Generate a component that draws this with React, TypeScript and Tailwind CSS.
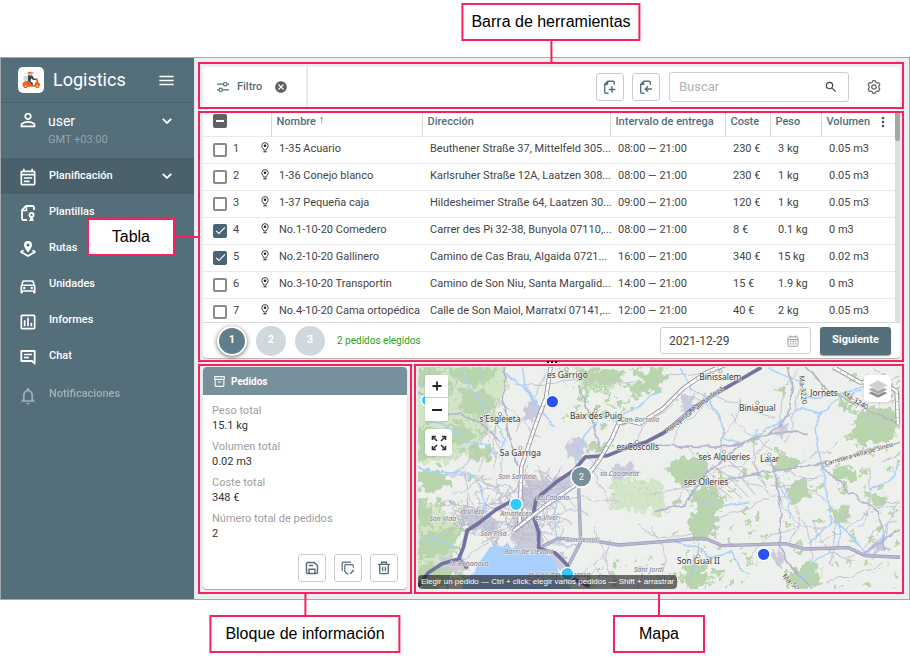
import { useState, type ReactNode } from "react";
import {
  MdCancel,
  MdCheck,
  MdMenu,
  MdMoreVert,
  MdNotificationsNone,
  MdOutlineAssessment,
  MdOutlineDirectionsCar,
  MdOutlineEventNote,
  MdOutlineInventory2,
  MdPersonOutline,
  MdSearch,
} from "react-icons/md";

type Order = {
  id: number;
  name: string;
  address: string;
  interval: string;
  cost: string;
  weight: string;
  volume: string;
};

const orders: Order[] = [
  { id: 1, name: "1-35 Acuario", address: "Beuthener Straße 37, Mittelfeld 305...", interval: "08:00 — 21:00", cost: "230 €", weight: "3 kg", volume: "0.05 m3" },
  { id: 2, name: "1-36 Conejo blanco", address: "Karlsruher Straße 12A, Laatzen 308...", interval: "08:00 — 21:00", cost: "230 €", weight: "1 kg", volume: "0.05 m3" },
  { id: 3, name: "1-37 Pequeña caja", address: "Hildesheimer Straße 64, Laatzen 30...", interval: "09:00 — 21:00", cost: "120 €", weight: "1 kg", volume: "0.05 m3" },
  { id: 4, name: "No.1-10-20 Comedero", address: "Carrer des Pi 32-38, Bunyola 07110,...", interval: "08:00 — 21:00", cost: "8 €", weight: "0.1 kg", volume: "0 m3" },
  { id: 5, name: "No.2-10-20 Gallinero", address: "Camino de Cas Brau, Algaida 0721...", interval: "16:00 — 21:00", cost: "340 €", weight: "15 kg", volume: "0.02 m3" },
  { id: 6, name: "No.3-10-20 Transportín", address: "Camino de Son Niu, Santa Margalid...", interval: "14:00 — 21:00", cost: "15 €", weight: "1.9 kg", volume: "0 m3" },
  { id: 7, name: "No.4-10-20 Cama ortopédica", address: "Calle de Son Maiol, Marratxí 07141,...", interval: "12:00 — 21:00", cost: "40 €", weight: "2 kg", volume: "0.05 m3" },
];

const totals = [
  ["Peso total", "15.1 kg"],
  ["Volumen total", "0.02 m3"],
  ["Coste total", "348 €"],
  ["Número total de pedidos", "2"],
];

/* ---------- icons ---------- */

function LogoIcon() {
  return (
    <svg viewBox="0 0 26 26" className="size-[26px]">
      <rect width="26" height="26" rx="5" fill="#fff" />
      <path d="M5.500 9h5.500v5H5.500z" fill="#cfd8dc" />
      <path d="M10 8.500c1-1.300 3-1.500 4-.5l2 3.500 3 .5-.3 1.300-4-.5-1.500-1.500-.7 3 2.500 2-.5 2.700h-1.400l-.2-2.400L10 14.500z" fill="#37474f" />
      <path d="M9.500 6.400C9.800 5 12 4.300 14 5.400l1.800.2-.2.9-6 .6z" fill="#f4631e" />
      <circle cx="12.600" cy="7.600" r="1.400" fill="#f2b28c" />
      <path d="M4.500 17.500c0-2.500 2-3.700 5-3.500l2.500 1.500 2 2.600h2.500c.2-2 1-3 2-3.500l-.8-3.200 1.600-.3 1 4.200c1.200.6 1.900 1.700 1.900 3.400h-3.700l-1 1.100H5z" fill="#f4631e" />
      <circle cx="7.600" cy="19" r="2.200" fill="#f4631e" />
      <circle cx="7.600" cy="19" r=".8" fill="#fff" />
      <circle cx="19.400" cy="19" r="2.200" fill="#f4631e" />
      <circle cx="19.400" cy="19" r=".8" fill="#fff" />
    </svg>
  );
}

function ChevronIcon() {
  return (
    <svg viewBox="0 0 10 6" className="h-[6px] w-[10px]" fill="none" stroke="currentColor" strokeWidth="1.800">
      <path d="M.8.8 5 5 9.200.8" />
    </svg>
  );
}

function TemplateIcon() {
  return (
    <svg viewBox="0 0 18 18" className="size-[18px]" fill="none" stroke="currentColor" strokeWidth="1.800">
      <path d="M8 16H4.500C3.600 16 3 15.400 3 14.500V6l4-4h6.500c.9 0 1.500.6 1.500 1.500V6" />
      <path d="M7.500 2v4.500H3" strokeWidth="1.400" />
      <path d="M12.500 8a3 3 0 0 0-3 3c0 1.500 1 2 1.700 3.500L10 17h5l-1.200-2.500c.7-1.500 1.700-2 1.700-3.500a3 3 0 0 0-3-3z" fill="currentColor" stroke="none" />
      <circle cx="12.500" cy="11" r="1.100" fill="#546e7a" stroke="none" />
    </svg>
  );
}

function RoutesIcon() {
  return (
    <svg viewBox="0 0 18 18" className="size-[18px]" fill="none">
      <path d="M4.500 10.200 2 12l7 4 7-4-2.500-1.800" stroke="currentColor" strokeWidth="1.700" strokeLinejoin="round" />
      <path d="M9 1a4 4 0 0 0-4 4c0 2.800 4 7.500 4 7.500S13 7.800 13 5a4 4 0 0 0-4-4z" fill="currentColor" />
      <circle cx="9" cy="5" r="1.500" fill="#546e7a" />
    </svg>
  );
}

function ChatIcon() {
  return (
    <svg viewBox="0 0 18 18" className="size-[18px]" fill="none" stroke="currentColor" strokeWidth="1.800">
      <path d="M2.300 3h13.400v12.500L13 13H2.300z" strokeLinejoin="round" />
      <path d="M5 6.600h8M5 9.400h5" strokeWidth="1.500" />
    </svg>
  );
}

function FilterIcon() {
  return (
    <svg viewBox="0 0 12 12" className="size-[12px]" fill="none" stroke="currentColor" strokeWidth="1.200">
      <path d="M0 3.200h6.400M10 3.200h2M0 8.800h1.800M5.500 8.800H12" />
      <circle cx="8.200" cy="3.200" r="1.700" />
      <circle cx="3.700" cy="8.800" r="1.700" />
    </svg>
  );
}

function GearIcon() {
  return (
    <svg viewBox="0 0 14 14" className="size-[14px]" fill="none" stroke="currentColor" strokeWidth="1.200" strokeLinejoin="round">
      <path d="M5.400 2 5.900.7h2.200L8.600 2l1.700 1 1.400-.3 1.200 2-.9 1.200v2.200l.9 1.200-1.200 2-1.400-.3-1.700 1-.5 1.300H5.900L5.400 12l-1.700-1-1.400.3-1.200-2L2 8.100V5.900l-.9-1.200 1.200-2 1.400.3z" />
      <circle cx="7" cy="7" r="2.200" />
    </svg>
  );
}

function PageIcon({ children }: { children: ReactNode }) {
  return (
    <svg viewBox="0 0 14 14" className="size-[14px]" fill="none" stroke="currentColor" strokeWidth="1.400">
      <path d="M5.500 13.200H3c-.8 0-1.300-.5-1.300-1.300V4.300L4.800 1.200H10c.8 0 1.300.5 1.300 1.300v2.200" />
      <path d="M5 1v3.700H1.600z" fill="currentColor" strokeWidth=".6" />
      {children}
    </svg>
  );
}

function PinIcon() {
  return (
    <svg viewBox="0 0 8 11" className="h-[11px] w-[8px]" fill="none" stroke="#444" strokeWidth="1">
      <path d="M4 .6A3.200 3.200 0 0 0 .8 3.800c0 1.700 1.500 2.500 2 4.200h2.400c.5-1.700 2-2.500 2-4.200A3.200 3.200 0 0 0 4 .6z" />
      <circle cx="4" cy="3.700" r="1.300" fill="#222" stroke="none" />
      <path d="M2.400 9.700h3.200" strokeWidth="1.300" />
    </svg>
  );
}

function CalendarIcon() {
  return (
    <svg viewBox="0 0 12 12" className="size-[12px]" fill="none" stroke="#9e9e9e" strokeWidth="1">
      <rect x="1" y="1.800" width="10" height="9.500" rx="1" />
      <path d="M1 4.500h10M3.500.3v2M8.500.3v2" />
      <path d="M3 6.500h6.400M3 8.800h6.400" strokeWidth="1.300" strokeDasharray="1.400 1" />
    </svg>
  );
}

function SaveIcon() {
  return (
    <svg viewBox="0 0 14 14" className="size-[14px]" fill="none" stroke="currentColor" strokeWidth="1.400">
      <path d="M1.500 2.800c0-.8.5-1.300 1.300-1.300h6.400l3.300 3.300v6.400c0 .8-.5 1.300-1.300 1.300H2.800c-.8 0-1.300-.5-1.300-1.300z" />
      <path d="M4 4.500h4M4 12.300V8.200h6v4.100" />
    </svg>
  );
}

function CopyEditIcon() {
  return (
    <svg viewBox="0 0 14 14" className="size-[14px]" fill="none" stroke="currentColor" strokeWidth="1.200">
      <path d="M1.200 10V2c0-.5.300-.8.800-.8h8" />
      <path d="M7.500 12.800H6.300L3.800 10.500V4.700c0-.7.400-1.100 1.100-1.100h6.300c.7 0 1.100.4 1.100 1.100v2" />
      <path d="m9.300 12.800 3.500-3.700" strokeWidth="1.500" />
    </svg>
  );
}

function TrashIcon() {
  return (
    <svg viewBox="0 0 14 14" className="size-[14px]" fill="none" stroke="currentColor" strokeWidth="1.400">
      <path d="M1 3.400h12M4.700 3V1.300h4.600V3" />
      <path d="M2.700 3.600v7.700c0 .8.500 1.300 1.300 1.300h6c.8 0 1.300-.5 1.300-1.300V3.600" />
      <path d="M5.600 5.800v4.400M8.400 5.800v4.400" />
    </svg>
  );
}

function ExpandIcon() {
  return (
    <svg viewBox="0 0 16 16" className="size-[16px]" fill="none" stroke="#333" strokeWidth="1.600">
      <path d="M1.500 5V1.500H5M11 1.500h3.500V5M14.500 11v3.500H11M5 14.500H1.500V11" />
      <path d="m2 2 4 4M14 2l-4 4M14 14l-4-4M2 14l4-4" />
    </svg>
  );
}

function LayersIcon() {
  return (
    <svg viewBox="0 0 22 22" className="size-[22px]">
      <path d="m11 10.500 10 4.500-10 5-10-5z" fill="#8a8a8a" stroke="#fff" strokeWidth=".6" />
      <path d="m11 7 10 4.500-10 5-10-5z" fill="#a8a8a8" stroke="#fff" strokeWidth=".6" />
      <path d="m11 2 10 5.500-10 5-10-5z" fill="#cfcfcf" stroke="#fff" strokeWidth=".6" />
    </svg>
  );
}

/* ---------- annotations ---------- */

const calloutBox = "whitespace-nowrap border-2 border-[#f5225b] bg-white text-center font-['Liberation_Sans',sans-serif] text-base leading-[34px] text-black";

function CalloutAbove({ label }: { label: string }) {
  return (
    <div className="absolute bottom-full left-1/2 z-10 flex -translate-x-1/2 flex-col items-center">
      <div className={`${calloutBox} px-2`}>{label}</div>
      <div className="h-[23px] w-[2px] bg-[#f5225b]" />
    </div>
  );
}

function CalloutBelow({ label, wide }: { label: string; wide?: boolean }) {
  return (
    <div className="absolute left-1/2 top-full z-10 flex -translate-x-1/2 flex-col items-center">
      <div className="h-[23px] w-[2px] bg-[#f5225b]" />
      <div className={`${calloutBox} ${wide ? "px-[14px]" : "px-6"}`}>{label}</div>
    </div>
  );
}

function CalloutLeft({ label }: { label: string }) {
  return (
    <div className="absolute right-full top-1/2 z-10 flex -translate-y-1/2 items-center">
      <div className={`${calloutBox} px-[23px]`}>{label}</div>
      <div className="h-[2px] w-[25px] bg-[#f5225b]" />
    </div>
  );
}

/* ---------- sidebar ---------- */

const navItems = [
  { label: "Plantillas", icon: <TemplateIcon /> },
  { label: "Rutas", icon: <RoutesIcon /> },
  { label: "Unidades", icon: <MdOutlineDirectionsCar className="size-[20px]" /> },
  { label: "Informes", icon: <MdOutlineAssessment className="size-[20px]" /> },
  { label: "Chat", icon: <ChatIcon /> },
];

function NavLink({ label, icon }: { label: string; icon: ReactNode }) {
  return (
    <a href="#" className="flex h-9 items-center gap-[11px] px-[17px] text-white">
      <span className="grid size-5 place-items-center pt-[2px]">{icon}</span>
      <span className="text-[11px] font-medium">{label}</span>
    </a>
  );
}

function Sidebar() {
  return (
    <aside className="w-[194px] shrink-0 border-r border-[#dfe5e8] bg-[#546e7a] text-white">
      <div className="flex h-[45px] items-center border-b border-[#4a626d] pl-[17px] pr-[18px]">
        <LogoIcon />
        <span className="ml-[9px] text-lg">Logistics</span>
        <button type="button" aria-label="Menu" className="ml-auto">
          <MdMenu className="size-[19px]" />
        </button>
      </div>
      <button type="button" className="flex h-[55px] w-full items-start pl-[16px] pr-[22px] pt-[6px] text-left">
        <MdPersonOutline className="size-[22px]" />
        <span className="ml-[9px]">
          <span className="block text-sm leading-[24px]">user</span>
          <span className="block text-[11px] leading-[13px] text-[#93a4ac]">GMT +03:00</span>
        </span>
        <span className="ml-auto mt-[9px]">
          <ChevronIcon />
        </span>
      </button>
      <nav>
        <div className="flex items-center bg-[#4a616c] pr-[22px]">
          <NavLink label="Planificación" icon={<MdOutlineEventNote className="size-[20px]" />} />
          <span className="ml-auto">
            <ChevronIcon />
          </span>
        </div>
        {navItems.map((item) => (
          <NavLink key={item.label} label={item.label} icon={item.icon} />
        ))}
        <div className="pt-[2px] opacity-45">
          <NavLink label="Notificaciones" icon={<MdNotificationsNone className="size-[20px]" />} />
        </div>
      </nav>
    </aside>
  );
}

/* ---------- toolbar ---------- */

const squareButton = "grid size-7 place-items-center rounded-[3px] border border-[#c3cfd5] bg-white text-[#546e7a]";

function Toolbar() {
  return (
    <section className="relative border-2 border-[#f5225b] pl-[3px] pr-[2px] pt-[3px]">
      <CalloutAbove label="Barra de herramientas" />
      <div className="flex h-10 items-center rounded-t bg-white">
        <div className="flex h-full w-[105px] items-center border-r-2 border-[#e6e9eb] pl-[14px] text-[#546e7a]">
          <FilterIcon />
          <span className="ml-2 text-[11px] font-medium">Filtro</span>
          <button type="button" aria-label="Quitar filtro" className="ml-3 text-[#616161]">
            <MdCancel className="size-[14px]" />
          </button>
        </div>
        <button type="button" aria-label="Añadir" className={`${squareButton} ml-auto`}>
          <PageIcon>
            <path d="M9 6.200v6.600M5.700 9.500h6.600" />
          </PageIcon>
        </button>
        <button type="button" aria-label="Importar" className={`${squareButton} ml-2`}>
          <PageIcon>
            <path d="M13 9H6.200M9 6.200 6.200 9 9 11.800" />
          </PageIcon>
        </button>
        <label className="ml-[9px] flex h-[30px] w-[180px] items-center rounded-[3px] border border-[#cfcfcf] pl-[9px] pr-[10px]">
          <input
            type="search"
            aria-label="Buscar"
            placeholder="Buscar"
            className="min-w-0 flex-1 bg-transparent text-[13px] text-[#4a4a4a] outline-none placeholder:text-[#b3b3b3]"
          />
          <MdSearch className="size-[14px] text-[#444]" />
        </label>
        <button type="button" aria-label="Ajustes" className="ml-[18px] mr-[19px] text-[#616161]">
          <GearIcon />
        </button>
      </div>
    </section>
  );
}

/* ---------- table ---------- */

function OrderCheckbox({ label, checked, onChange }: { label: string; checked: boolean; onChange: () => void }) {
  return (
    <span className="grid size-[14px] place-items-center">
      <input
        type="checkbox"
        aria-label={label}
        checked={checked}
        onChange={onChange}
        className="col-start-1 row-start-1 size-[14px] appearance-none rounded-[2px] border-2 border-[#8a8a8a] checked:border-[#4a6572] checked:bg-[#4a6572]"
      />
      {checked && <MdCheck className="pointer-events-none col-start-1 row-start-1 size-[13px] text-white" />}
    </span>
  );
}

const th = "h-[23px] border-l border-[#d8dcde] pb-[5px] pl-[5px] text-left font-medium";
const td = "whitespace-nowrap pl-[8px]";

function OrdersTable() {
  const [selected, setSelected] = useState<number[]>([4, 5]);
  const [page, setPage] = useState(1);
  const [date, setDate] = useState("2021-12-29");

  function toggle(id: number) {
    setSelected((ids) => (ids.includes(id) ? ids.filter((item) => item !== id) : [...ids, id]));
  }

  return (
    <section className="relative border-2 border-[#f5225b] pb-[2px] pl-[3px] pr-[2px]">
      <CalloutLeft label="Tabla" />
      <div className="rounded-b bg-white shadow-[0_1px_1px_rgba(0,0,0,0.25)]">
        <div className="flex h-[209px] overflow-hidden">
          <table className="w-full table-fixed text-[11px] text-[#444]">
            <colgroup>
              <col className="w-[68px]" />
              <col className="w-[151px]" />
              <col />
              <col className="w-[115px]" />
              <col className="w-[45px]" />
              <col className="w-[51px]" />
              <col className="w-[74px]" />
            </colgroup>
            <thead className="text-[#546e7a]">
              <tr className="border-b border-[#e8eaeb]">
                <th className="h-[23px] pb-[6px] pl-[10px]">
                  <button type="button" aria-label="Deseleccionar todo" className="grid size-[14px] place-items-center rounded-[2px] bg-[#616161]">
                    <span className="h-[2px] w-2 bg-white" />
                  </button>
                </th>
                <th className={th}>
                  Nombre <span className="align-top font-normal leading-[11px]">↑</span>
                </th>
                <th className={th}>Dirección</th>
                <th className={th}>Intervalo de entrega</th>
                <th className={th}>Coste</th>
                <th className={th}>Peso</th>
                <th className={th}>
                  <div className="flex items-center justify-between pr-1">
                    Volumen
                    <MdMoreVert className="size-4 text-[#555]" />
                  </div>
                </th>
              </tr>
            </thead>
            <tbody>
              {orders.map((order) => (
                <tr key={order.id} className="h-[27px] border-b border-[#e8eaeb]">
                  <td className="pl-[10px]">
                    <div className="flex items-center gap-[6px]">
                      <OrderCheckbox
                        label={order.name}
                        checked={selected.includes(order.id)}
                        onChange={() => toggle(order.id)}
                      />
                      <span>{order.id}</span>
                      <span className="-mt-1 ml-auto mr-[2px]">
                        <PinIcon />
                      </span>
                    </div>
                  </td>
                  <td className={td}>{order.name}</td>
                  <td className={td}>{order.address}</td>
                  <td className={td}>{order.interval}</td>
                  <td className={td}>{order.cost}</td>
                  <td className={td}>{order.weight}</td>
                  <td className={td}>{order.volume}</td>
                </tr>
              ))}
            </tbody>
          </table>
          <div className="w-[5px] shrink-0 bg-[#e0e0e0]">
            <div className="h-7 rounded-b bg-[#a6a6a6]" />
          </div>
        </div>
        <div className="flex h-9 items-center border-t border-[#d5d9db] pl-[14px] pr-[9px]">
          <div className="flex items-center gap-[9px] text-[11px] font-bold text-white">
            {[1, 2, 3].map((n) => (
              <button
                key={n}
                type="button"
                onClick={() => setPage(n)}
                className={
                  n === page
                    ? "size-[30px] rounded-full border-2 border-white bg-[#607d8b] shadow-[0_1px_4px_rgba(0,0,0,0.6)]"
                    : "size-[30px] rounded-full bg-[#cfd8dc]"
                }
              >
                {n}
              </button>
            ))}
          </div>
          <span className="ml-3 text-[10px] text-[#22a522]">{selected.length} pedidos elegidos</span>
          <label className="ml-auto flex h-[27px] w-[151px] items-center rounded-[3px] border border-[#cfcfcf] pl-2 pr-[11px]">
            <input
              type="text"
              aria-label="Fecha"
              value={date}
              onChange={(e) => setDate(e.target.value)}
              className="min-w-0 flex-1 bg-transparent text-xs text-[#444] outline-none"
            />
            <CalendarIcon />
          </label>
          <button type="button" className="ml-[9px] h-7 w-[71px] rounded-[3px] bg-[#546e7a] text-[11px] font-bold text-white shadow-[0_1px_1px_rgba(0,0,0,0.4)]">
            Siguiente
          </button>
        </div>
      </div>
    </section>
  );
}

/* ---------- info block ---------- */

function InfoBlock() {
  return (
    <section className="relative w-[214px] shrink-0 border-2 border-[#f5225b] px-[3px] pb-[3px] pt-px">
      <CalloutBelow label="Bloque de información" wide />
      <div className="flex h-full flex-col rounded bg-white shadow-[0_1px_1px_rgba(0,0,0,0.3)]">
        <h2 className="flex h-7 items-center gap-[5px] rounded-t bg-[#78909c] pl-[10px] text-[10px] font-bold text-white">
          <MdOutlineInventory2 className="size-[13px]" />
          Pedidos
        </h2>
        <dl className="flex flex-col gap-[6px] px-[9px] pt-2 text-[11px] leading-[15px]">
          {totals.map(([name, value]) => (
            <div key={name}>
              <dt className="text-[#9e9e9e]">{name}</dt>
              <dd className="text-[#333]">{value}</dd>
            </div>
          ))}
        </dl>
        <div className="mt-auto flex justify-end gap-2 px-[9px] pb-[7px] pt-3">
          <button type="button" aria-label="Guardar" className={squareButton}>
            <SaveIcon />
          </button>
          <button type="button" aria-label="Editar copia" className={squareButton}>
            <CopyEditIcon />
          </button>
          <button type="button" aria-label="Eliminar" className={squareButton}>
            <TrashIcon />
          </button>
        </div>
      </div>
    </section>
  );
}

/* ---------- map ---------- */

// small linear generator, so that the terrain is the same on every render
function seeded(seed: number) {
  let s = seed;
  return () => {
    s = (s * 16807) % 2147483647;
    return s / 2147483647;
  };
}

function streets(seed: number, count: number, x: number, y: number, w: number, h: number, len: number) {
  const rnd = seeded(seed);
  let d = "";
  for (let i = 0; i < count; i++) {
    let px = x + rnd() * w;
    let py = y + rnd() * h;
    let a = rnd() * Math.PI * 2;
    d += `M${px.toFixed(0)} ${py.toFixed(0)}`;
    for (let k = 0; k < 5; k++) {
      a += (rnd() - 0.5) * 1.1;
      px += (Math.cos(a) * len) / 5;
      py += (Math.sin(a) * len) / 5;
      d += `L${px.toFixed(0)} ${py.toFixed(0)}`;
    }
  }
  return d;
}

function groves(seed: number, count: number, x: number, y: number, w: number, h: number) {
  const rnd = seeded(seed);
  let d = "";
  for (let i = 0; i < count; i++) {
    const px = x + rnd() * w;
    const py = y + rnd() * h;
    const r = 4 + rnd() * 11;
    d += `M${px.toFixed(0)} ${py.toFixed(0)}l${r.toFixed(0)} ${(-r * rnd()).toFixed(0)}l${(r * 0.7).toFixed(0)} ${(r * 0.8).toFixed(0)}l${(-r).toFixed(0)} ${(r * 0.6).toFixed(0)}z`;
  }
  return d;
}

const countryRoads = streets(77, 65, 250, 40, 1210, 660, 190) + streets(14, 14, 20, 40, 230, 400, 120);
const cityStreets = streets(31, 110, 230, 370, 210, 210, 60) + streets(12, 40, 130, 440, 100, 100, 50);
const groveShapes =
  groves(5, 60, 18, 36, 240, 330) + groves(19, 50, 18, 430, 130, 260) + groves(23, 40, 440, 36, 220, 180) +
  groves(41, 130, 780, 280, 680, 420) + groves(8, 40, 1300, 60, 160, 300) + groves(66, 25, 520, 600, 260, 100);

const woods = [
  "M18 36h72l-18 30-34 14-20 30z",
  "M112 40l70-4 78 6-10 26-58 24-62-10z",
  "M150 100l60 6 40 20 10 30-60 30-50-20z",
  "M18 210l50 14 30 30-30 50-50 10z",
  "M100 210l80 10 20 30-70 20z",
  "M180 270l60 10-10 30-70 10z",
  "M18 340l90 20 10 30-60 20-40-10z",
  "M18 440l40 20-4 50-36 12z",
  "M30 540l60-20 50 20-20 50-60 20-42-10z",
  "M20 620l50 6 60 10-20 60-92 6z",
  "M500 44l100-4 36 26-42 26-72-10z",
  "M650 40l60 10 40-14 20 40-60 20z",
  "M520 66l20 4-12 60-24 20z",
  "M520 270l60-10 20 16-60 20z",
  "M630 90l110-10 10 30-90 4z",
  "M762 340l40-30 70-4 22 34-26 36-66 16z",
  "M836 404l80-8 26 40-22 40-16 66-60 20-14-40 20-60z",
  "M812 640l60-12 20 60-60 14z",
  "M905 640l34 4-10 30z",
  "M1100 300l50 10 20 20-50 20-34-10z",
  "M1010 250l40-10-6 16-40 10z",
  "M1274 332l54 14 10 34-48-6-36-14z",
  "M1330 190l40-40 84 20 4 70-50 24-30-10-30 24-30-30z",
  "M1130 380l60-10 10 50-44 30-30-10z",
  "M1140 650l60-36 20 30 10 48-70 10-50-20z",
  "M1240 466l60-10 20 30-40 16z",
  "M1376 420l50 10-10 26-36-6z",
  "M1090 90l40 10-10 20z",
  "M1270 120l40 16 10 40-30-10z",
];

const rivers = [
  "M150 36l30 70 60 80 40 60-20 60",
  "M50 200l70 20 40 40 70 10 20 40",
  "M18 340l90 14 60-4 40 40 10 60 10 60",
  "M330 36l10 60 60 90 30 30",
  "M270 50l60 40 40 60 10 40",
  "M750 100l-80 60-60 30",
  "M560 190l-50 60-20 60 10 60-60 50-14 60 10 90",
  "M18 560l60-10 40 20 40 60",
  "M804 40l30 60 55 30 30 50 20 70 50 18 80-48 100-60 60 15-20 45 10 80 20 70 20 130 25 5-5 65-80 60-40 50",
  "M1069 40l90 40 30 50 80-10 85-25 12-40",
  "M1229 175l60-50 60-20",
  "M1259 500l-70 65",
  "M1284 505l50 60 50 40",
  "M1100 366l10 40 20 30 2 55",
  "M870 436l40 20 60-10 40-6",
  "M790 560l70 20 40 30 60-20 20 50 30 14",
  "M850 600l-10 60",
  "M1457 330l-6 30-40 30-40 10",
  "M1429 500l-30 70-40 30",
];

const placeLabels: [string, number, number][] = [
  ["es Garrigó", 466, 68],
  ["s'Esgleieta", 264, 202],
  ["Baix des Puig", 552, 192],
  ["Sa Garriga", 325, 304],
  ["es Coscolls", 677, 285],
  ["Binissalem", 925, 74],
  ["Biniagual", 1036, 167],
  ["Jornets", 1236, 124],
  ["ses Alqueries", 937, 314],
  ["Laiar", 1073, 322],
  ["ses Olleries", 882, 391],
  ["Son Gual II", 859, 627],
];

const suburbLabels: [string, number, number][] = [
  ["Can Borralló", 684, 200],
  ["Son Sardina", 315, 372],
  ["sa Cabaneta", 622, 362],
  ["La Cabana", 422, 436],
  ["la Vileta", 181, 477],
  ["Son Vida", 92, 498],
  ["Amanecer", 311, 484],
  ["es Viver", 404, 495],
  ["Son Pisà", 244, 544],
  ["Son Ferriol", 511, 562],
  ["Barri de Llevant", 350, 598],
  ["la Bonanova", 172, 634],
  ["Sant Jordi", 710, 650],
  ["es Coll d'en Rabassa", 442, 665],
];

const motorways = [
  "M18 694l30-40 42-28 50-14 14-34 12-52 32-20 54-42 40-22 20 4",
  "M140 612l26 28",
  "M372 432l60-50 54-36 34-40 66-4 54-22 60-18 54-28 30-24 64-54 80-50 60-34 60-35",
  "M372 432l-8 50 16 50v48l50 14 36 36 6 34 60 30",
];

const railways = [
  "M416 36l-14 92-32 84-26 78-16 46-6 186",
  "M304 528l96-76 122-84 38-50 40-68 20-46 30-6 34 8 70-46 60-60 70-48 60-24",
  "M1264 36l80 46 60-2 50 28 4 100",
];

const mainRoads = [
  "M500 400l6 160-36 70",
  "M380 580l60-30 120 10 60 10 130-10 110-10 30 4 40 18 190-6 60 16 130-4 50 24 130 6",
];

const secondaryRoads = [
  "M640 272l90-2 150 5 100-7 70-28 80-10 60 5",
  "M929 375l300-50 235-65",
  "M729 470l90-20 60-90 110-92",
  "M280 36l-6 100 14 100 30 100",
  "M500 90l30 80 30 90 10 40",
  "M1180 36l70 70 120 60 94 40",
  "M1070 240l60-60 10-80-10-64",
  "M1080 320l30 160-10 90 40 70 60 60",
  "M1229 330l80 80 90 60 20 110",
  "M1464 520l-70 50-50 30",
  "M18 110l80 60 90 20 80 70",
];

const villages = [
  [464, 43], [264, 177], [551, 168], [325, 279], [675, 261], [925, 49],
  [1036, 143], [1235, 99], [936, 290], [1072, 299], [881, 368], [859, 604],
];

function MapCanvas() {
  return (
    <svg
      viewBox="18 36 1446 666"
      preserveAspectRatio="xMidYMid slice"
      className="absolute inset-0 size-full font-['Noto_Sans',sans-serif]"
    >
      <defs>
        <filter id="ragged" x="-5%" y="-5%" width="110%" height="110%" colorInterpolationFilters="sRGB">
          <feTurbulence type="fractalNoise" baseFrequency="0.045" numOctaves="3" seed="4" />
          <feDisplacementMap in="SourceGraphic" scale="46" xChannelSelector="R" yChannelSelector="G" />
        </filter>
        <filter id="wobble" x="-5%" y="-5%" width="110%" height="110%" colorInterpolationFilters="sRGB">
          <feTurbulence type="fractalNoise" baseFrequency="0.03" numOctaves="2" seed="9" />
          <feDisplacementMap in="SourceGraphic" scale="18" xChannelSelector="R" yChannelSelector="G" />
        </filter>
        <pattern id="orchard" width="18" height="18" patternUnits="userSpaceOnUse">
          <rect width="18" height="18" fill="#d3e6c9" />
          <circle cx="5" cy="5" r="2" fill="#b4d0a6" />
        </pattern>
      </defs>
      <rect x="18" y="36" width="1446" height="666" fill="#edf0ec" />

      <g filter="url(#ragged)">
        <g fill="url(#orchard)">
          <path d="M-20 0h290l20 90-30 80-50 80-70 70-160 10z" />
          <path d="M-20 430l100 20 60 80-20 80-60 40-80 60z" />
          <path d="M600 370l130 10 30 60-60 30-110-10z" />
          <path d="M490 36l120 4 30 50-130 20z" />
          <path d="M729 370l30 20v80l-40 20z" />
        </g>
        <g fill="#b8d5ad">
          {woods.map((d) => (
            <path key={d} d={d} />
          ))}
          <path d={groveShapes} />
        </g>
        <g fill="#cccbdc">
          <path d="M340 150l36-14 14 30-20 36-30-10z" />
          <path d="M462 266l44-20 20 36-20 30-40-6z" />
          <path d="M344 360l60 10 20 60-60 40-50-20z" />
          <path d="M302 470l70 10 14 80-20 34-60-10-10-60z" />
          <path d="M150 450l60 20 60 30-20 40-60-10-50-30z" />
          <path d="M400 380l70-20 20 30-70 50z" />
          <path d="M600 334l60-10 20 30-70 20z" />
          <path d="M390 590l60 6 30 60-40-10z" />
          <path d="M80 600l60 6 40 30-20 20-60-10z" />
          <path d="M800 130l40-14 14 40-40 20z" />
          <path d="M1090 220l34-6 6 28-36 6z" />
          <path d="M1380 560l36-10 10 40-40 14z" />
          <path d="M1086 590l24 4 4 40-26-10z" />
        </g>
      </g>

      <g fill="none" filter="url(#wobble)" strokeLinejoin="round">
        <path d={countryRoads} stroke="#c2c1d5" strokeWidth="2.800" />
        <path d={cityStreets} stroke="#b9b8cd" strokeWidth="2.500" />
        <g stroke="#a9d1fb" strokeWidth="4.500">
          {rivers.map((d) => (
            <path key={d} d={d} />
          ))}
        </g>
        <g stroke="#b4b3cb" strokeWidth="5">
          {secondaryRoads.map((d) => (
            <path key={d} d={d} />
          ))}
        </g>
      </g>
      <path d="M900 380l60 50M920 370l70 60M950 366l60 60M980 360l50 60M880 400l50 30M930 300l70 60M900 330l60 40M1020 320l40 70" fill="none" stroke="#bcbbd0" strokeWidth="3" />
      <path
        d="M214 606l20-30 20-4 18 4 14-14 12 18 30-4 24 22 50-6 26 30 14 34 40 50H148l10-34 30-20 8-24z"
        fill="#a9cffc"
      />

      <g fill="none" strokeLinejoin="round">
        {mainRoads.map((d) => (
          <g key={d}>
            <path d={d} stroke="#9a99ba" strokeWidth="10" />
            <path d={d} stroke="#b9b8d2" strokeWidth="6" />
          </g>
        ))}
        <g stroke="#7473a0" strokeWidth="11">
          {motorways.map((d) => (
            <path key={d} d={d} />
          ))}
        </g>
        {railways.map((d) => (
          <g key={d}>
            <path d={d} stroke="#8f8e99" strokeWidth="13" />
            <path d={d} stroke="#fff" strokeWidth="8" />
            <path d={d} stroke="#b5b4be" strokeWidth="8" strokeDasharray="2 22" />
          </g>
        ))}
      </g>

      <g textAnchor="middle" stroke="#f4f6f3" strokeWidth="3" paintOrder="stroke" strokeLinejoin="round">
        {suburbLabels.map(([text, x, y]) => (
          <text key={text} x={x} y={y} fontSize="21" fontStyle="italic" fill="#777785">
            {text}
          </text>
        ))}
        {placeLabels.map(([text, x, y]) => (
          <text key={text} x={x} y={y} fontSize="25" fill="#333">
            {text}
          </text>
        ))}
        <g fontSize="21" fill="#444">
          <text transform="translate(851 168) rotate(-38)">Autopista Palma–Inca</text>
          <text transform="translate(1166 105) rotate(84)">Ma-3220</text>
          <text transform="translate(1327 142) rotate(32)">Ma-3240</text>
          <text transform="translate(1342 303) rotate(-16)" fontSize="19">Carretera vella de Sineu</text>
          <text transform="translate(1132 686) rotate(44)">Ma-50</text>
        </g>
      </g>
      <g fill="#fff" stroke="#777" strokeWidth="2">
        {villages.map(([cx, cy]) => (
          <circle key={cx} cx={cx} cy={cy} r="5" />
        ))}
      </g>

      <g stroke="#fff" strokeWidth="4">
        <g fill="#33c9fb">
          <circle cx="46" cy="136" r="18" />
          <circle cx="312" cy="448" r="19" />
          <circle cx="466" cy="656" r="19" />
        </g>
        <g fill="#2752f5">
          <circle cx="421" cy="140" r="19" />
          <circle cx="1055" cy="598" r="19" />
        </g>
        <circle cx="508" cy="365" r="31" fill="#78909c" />
      </g>
      <text x="508" y="375" textAnchor="middle" fontSize="28" fill="#fff" className="font-[Roboto,sans-serif]">
        2
      </text>
    </svg>
  );
}

function MapPanel() {
  return (
    <section className="relative min-w-0 flex-1 border-2 border-[#f5225b] px-[2px] pb-[3px] pt-px">
      <CalloutBelow label="Mapa" />
      <div className="absolute -top-[5px] left-[131px] w-[10px] border-t-2 border-dotted border-black" />
      <div className="relative h-full overflow-hidden rounded-sm">
        <MapCanvas />
        <div className="absolute left-[7px] top-2 w-[23px] rounded-[2px] bg-white text-[#222] shadow">
          <button type="button" aria-label="Acercar" className="grid h-[23px] w-full place-items-center border-b border-[#ccc]">
            <svg viewBox="0 0 10 10" className="size-[10px]" stroke="currentColor" strokeWidth="1.800">
              <path d="M5 .5v9M.5 5h9" />
            </svg>
          </button>
          <button type="button" aria-label="Alejar" className="grid h-[23px] w-full place-items-center">
            <svg viewBox="0 0 10 10" className="size-[10px]" stroke="currentColor" strokeWidth="1.800">
              <path d="M0 5h10" />
            </svg>
          </button>
        </div>
        <button type="button" aria-label="Pantalla completa" className="absolute left-[7px] top-[62px] grid size-[27px] place-items-center rounded bg-white shadow">
          <ExpandIcon />
        </button>
        <button type="button" aria-label="Capas" className="absolute right-[9px] top-2 grid size-[27px] place-items-center rounded bg-white shadow">
          <LayersIcon />
        </button>
        <p className="absolute bottom-0 left-0 rounded-sm bg-black/55 px-[3px] font-['Liberation_Sans',sans-serif] text-[8px] leading-[14px] text-white">
          Elegir un pedido — Ctrl + click; elegir varios pedidos — Shift + arrastrar
        </p>
      </div>
    </section>
  );
}

export default function App() {
  return (
    <div className="bg-white pb-[59px] pt-[57px] font-[Roboto,sans-serif]">
      <div className="flex border border-[#a3a8aa] bg-[#eceff1]">
        <Sidebar />
        <main className="flex min-w-0 flex-1 flex-col pb-[5px] pl-[3px] pr-[5px] pt-1">
          <Toolbar />
          <div className="ml-[5px] mr-1 h-[2px] bg-white" />
          <OrdersTable />
          <div className="mt-[2px] flex min-h-[230px] gap-[2px]">
            <InfoBlock />
            <MapPanel />
          </div>
        </main>
      </div>
    </div>
  );
}
